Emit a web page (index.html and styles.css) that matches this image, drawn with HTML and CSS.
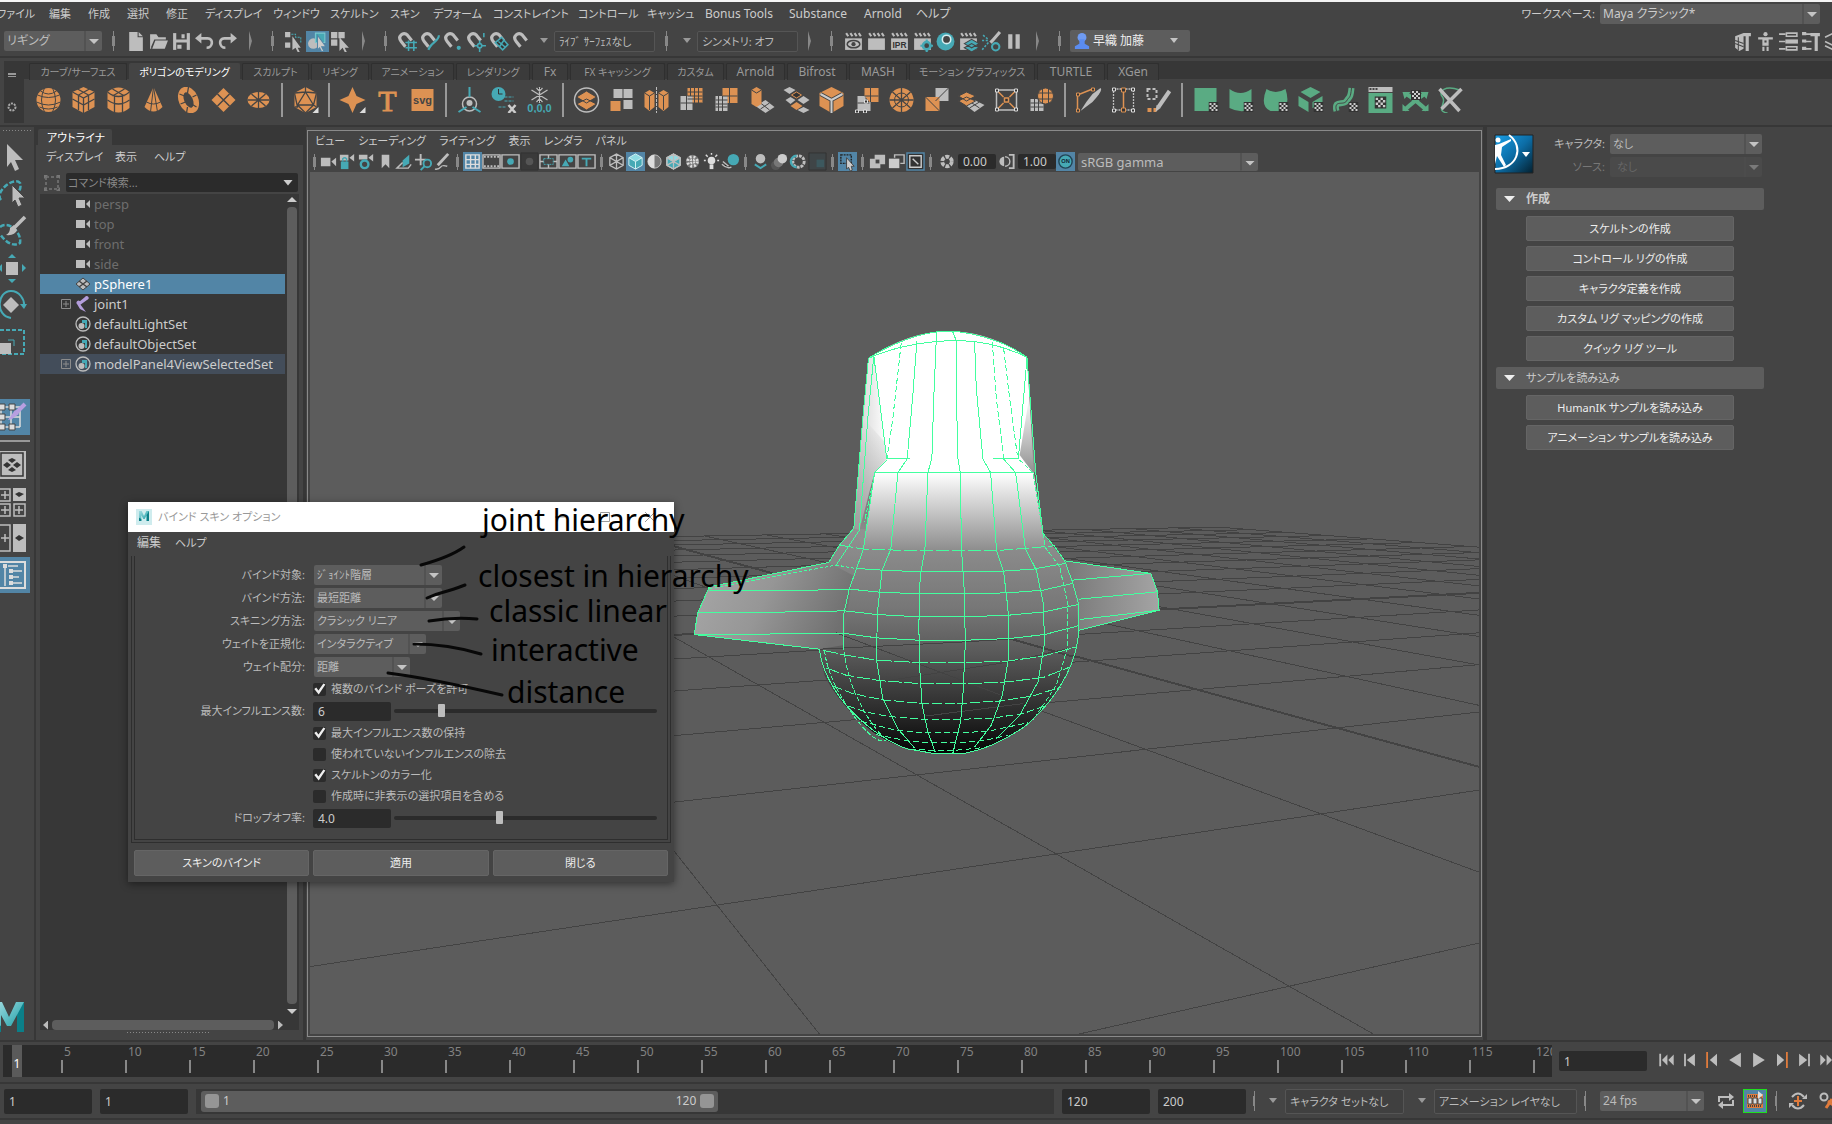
FILE: index.html
```html
<!DOCTYPE html>
<html lang="ja">
<head>
<meta charset="utf-8">
<title>Maya - バインド スキン オプション</title>
<link rel="stylesheet" href="styles.css">
</head>
<body>
<svg class="defs" aria-hidden="true">
<defs>
<linearGradient id="gMid" x1="0" y1="0" x2="0" y2="1"><stop offset="0" stop-color="#fff"/><stop offset=".1" stop-color="#f4f4f4"/><stop offset="1" stop-color="#8c8c8c"/></linearGradient>
<linearGradient id="gBall" x1="0" y1="0" x2="0" y2="1"><stop offset="0" stop-color="#929292"/><stop offset=".35" stop-color="#777"/><stop offset=".55" stop-color="#5a5a5a"/><stop offset=".8" stop-color="#2e2e2e"/><stop offset="1" stop-color="#050505"/></linearGradient>
<linearGradient id="gWl" x1="0" y1="0" x2="1" y2=".25"><stop offset="0" stop-color="#a8a8a8"/><stop offset=".5" stop-color="#969696"/><stop offset="1" stop-color="#707070"/></linearGradient>
<linearGradient id="gWr" x1="0" y1="0" x2="1" y2="0"><stop offset="0" stop-color="#727272"/><stop offset="1" stop-color="#a4a4a4"/></linearGradient>
<linearGradient id="gSideL" x1="0" y1="0" x2="1" y2="0"><stop offset="0" stop-color="#cfcfcf"/><stop offset="1" stop-color="#fff"/></linearGradient>
<linearGradient id="gSideD" x1="0" y1="0" x2="0" y2="1"><stop offset="0" stop-color="#999" stop-opacity="0"/><stop offset="1" stop-color="#909090"/></linearGradient>
<linearGradient id="gHik" x1="0" y1="0" x2="1" y2="1"><stop offset="0" stop-color="#1aa0e8"/><stop offset=".5" stop-color="#0c6da6"/><stop offset="1" stop-color="#04202f"/></linearGradient>
<linearGradient id="gM" x1="0" y1="0" x2="1" y2="1"><stop offset="0" stop-color="#a5dde2"/><stop offset="1" stop-color="#129aa2"/></linearGradient>

<symbol id="clap" viewBox="0 0 20 20"><path fill="#bdbdbd" d="M2 7h16v11H2z"/><path stroke="#bdbdbd" stroke-width="2" d="M3 2l2 3M7 2l2 3M11 2l2 3M15 2l2 3"/></symbol>
<symbol id="magnet" viewBox="0 0 20 20"><path fill="none" stroke="#bdbdbd" stroke-width="3" d="M8 15L4 10C0 5 6 0 10 4l4 5"/></symbol>
<symbol id="cam" viewBox="0 0 16 12"><path fill="#bdbdbd" d="M1 2h9v8H1zM11 6l4-4v8z"/></symbol>
<symbol id="set" viewBox="0 0 16 16"><circle cx="8" cy="8" r="7" fill="none" stroke="#bdbdbd" stroke-width="1.3"/><path fill="#46a9b5" d="M7 4h5v8h-2V7H7z"/><circle cx="6.500" cy="10" r="3" fill="#bdbdbd"/></symbol>
<symbol id="chk" viewBox="0 0 10 10"><path fill="#333" d="M0 0h10v10H0z"/><path fill="#ccc" d="M1 1h2v2H1zM5 1h2v2H5zM3 3h2v2H3zM7 3h2v2H7zM1 5h2v2H1zM5 5h2v2H5zM3 7h2v2H3zM7 7h2v2H7z"/></symbol>
<symbol id="cube" viewBox="0 0 20 20"><path fill="#46a9b5" d="M3 6l7-4 7 4v8l-7 4-7-4z"/><path fill="#8fdbe2" d="M3 6l7-4 7 4-7 4z"/><path stroke="#d5f2f4" fill="none" d="M3 6l7 4 7-4M10 10v8M3 6l7-4 7 4v8l-7 4-7-4z"/></symbol>
<symbol id="wcube" viewBox="0 0 20 20"><path stroke="#bdbdbd" stroke-width="1.400" fill="none" d="M3 6l7 4 7-4M10 10v8M3 6l7-4 7 4v8l-7 4-7-4zM10 2v8M3 14l7-4 7 4"/></symbol>
<symbol id="plus" viewBox="0 0 10 10"><path fill="none" stroke="#8c8c8c" d="M.5.5h9v9h-9zM5 2v6M2 5h6"/></symbol>
<symbol id="maya" viewBox="0 0 30 30"><path fill="url(#gM)" d="M0 0h8l7 15L22 0h8v30h-7V13l-6 11h-4L7 13v17H0z"/><path fill="#0b7f88" d="M23 13l7-13v30h-7zM0 20l7 4v6H0z"/></symbol>
</defs>
</svg>

<nav class="menubar" aria-label="メイン メニュー">
  <button>ファイル</button><button>編集</button><button>作成</button><button>選択</button><button>修正</button><button>ディスプレイ</button><button>ウィンドウ</button><button>スケルトン</button><button>スキン</button><button>デフォーム</button><button>コンストレイント</button><button>コントロール</button><button>キャッシュ</button><button>Bonus Tools</button><button>Substance</button><button>Arnold</button><button>ヘルプ</button>
  <div class="workspace"><label for="ws">ワークスペース:</label><span class="combo"><select id="ws"><option>Maya クラシック*</option></select></span></div>
</nav>

<div class="statusline">
  <span class="combo mode"><select aria-label="メニュー セット"><option>リギング</option></select></span>
  <i class="sep"></i>
  <svg class="ic" viewBox="0 0 20 20"><path fill="#bdbdbd" d="M4 1h8v5h5v13H4zM13 1l4 4h-4z"/></svg>
  <svg class="ic" viewBox="0 0 20 20"><path fill="#bdbdbd" d="M2 3h6l2 3h7v2H6L3 15v2H2zM7 9h12l-3 8H4z"/></svg>
  <svg class="ic" viewBox="0 0 20 20"><path fill="#bdbdbd" d="M2 2h16v16H2z"/><path fill="#444" d="M5 2h10v6H5zM5 11h10v7H5z"/><path fill="#bdbdbd" d="M10 3h3v4h-3zM6 13h4v4H6z"/></svg>
  <svg class="ic" viewBox="0 0 20 20"><path fill="none" stroke="#bdbdbd" stroke-width="2.500" d="M5 7h8c6 0 5 9-1 9"/><path fill="#bdbdbd" d="M1 7l6-5v10z"/></svg>
  <svg class="ic" viewBox="0 0 20 20"><path fill="none" stroke="#bdbdbd" stroke-width="2.500" d="M15 7H7c-6 0-5 9 1 9"/><path fill="#bdbdbd" d="M19 7l-6-5v10z"/></svg>
  <i class="sep end"></i><i class="sep"></i>
  <svg class="ic" viewBox="0 0 20 20"><path fill="#bdbdbd" d="M1 1h5v5H1zM1 11h5v5H1zM8 5l8 11-3 0 2 4-2 0-2-4-3 2z"/><path stroke="#46a9b5" fill="none" stroke-dasharray="2 1" d="M7 3h4v3h5v6"/></svg>
  <span class="ic on"><svg viewBox="0 0 20 20"><circle cx="6" cy="12" r="5" fill="#bdbdbd"/><path fill="#46a9b5" stroke="#7cc7cf" d="M8 2h9v9H8z"/><path fill="#ccc" stroke="#5285a6" d="M10 4l8 11h-4l2 4-2 1-2-4-2 2z"/></svg></span>
  <svg class="ic" viewBox="0 0 20 20"><path fill="#bdbdbd" d="M1 1h6v6H1zM8 1h6v6H8zM1 8h6v6H1zM9 6l9 10h-4l2 4h-2l-2-4-3 3z"/></svg>
  <i class="sep end"></i><i class="sep"></i>
  <svg class="ic" viewBox="0 0 20 20"><use href="#magnet"/><path stroke="#46a9b5" stroke-width="1.500" d="M11 9v10M16 9v10M8 11h11M8 16h11"/></svg>
  <svg class="ic" viewBox="0 0 20 20"><use href="#magnet"/><path stroke="#46a9b5" stroke-width="2" fill="none" d="M18 4c0 6-8 7-10 14"/></svg>
  <svg class="ic" viewBox="0 0 20 20"><use href="#magnet"/><circle cx="15" cy="16" r="2" fill="#46a9b5"/></svg>
  <svg class="ic" viewBox="0 0 20 20"><use href="#magnet"/><circle cx="13" cy="14" r="2" stroke="#46a9b5" fill="none" stroke-width="1.500"/><path stroke="#46a9b5" stroke-width="1.500" d="M13 9v3M13 16v4M8 14h3M15 14h4M17 2v4"/></svg>
  <svg class="ic" viewBox="0 0 20 20"><use href="#magnet"/><path stroke="#46a9b5" fill="#333" stroke-width="1.500" d="M6 11l6-5 6 7-5 5zM9 10l6 5M14 9l-4 6"/></svg>
  <svg class="ic" viewBox="0 0 20 20"><use href="#magnet"/></svg>
  <i class="tri"></i>
  <input class="field" aria-label="ライブ サーフェス" value="ﾗｲﾌﾞ ｻｰﾌｪｽなし" readonly>
  <i class="sep"></i><i class="tri"></i>
  <input class="field" aria-label="シンメトリ" value="シンメトリ: オフ" readonly>
  <i class="sep end"></i><i class="sep"></i>
  <svg class="ic" viewBox="0 0 20 20"><use href="#clap"/><ellipse cx="10" cy="12.500" rx="6" ry="3.500" fill="none" stroke="#444" stroke-width="1.500"/><circle cx="10" cy="12.500" r="2" fill="#444"/></svg>
  <svg class="ic" viewBox="0 0 20 20"><use href="#clap"/></svg>
  <svg class="ic" viewBox="0 0 20 20"><use href="#clap"/><text x="10" y="16" text-anchor="middle" class="ipr">IPR</text></svg>
  <svg class="ic" viewBox="0 0 20 20"><use href="#clap"/><circle cx="14" cy="14" r="3.500" fill="#444" stroke="#46a9b5" stroke-width="2.500"/><path stroke="#46a9b5" stroke-width="2" d="M14 8v2M14 18v2M8 14h2M18 14h2"/></svg>
  <svg class="ic" viewBox="0 0 20 20"><circle cx="10" cy="10" r="8.500" fill="#46a9b5"/><circle cx="11" cy="8" r="4" fill="#444" stroke="#d5eef0" stroke-width="1.500"/></svg>
  <svg class="ic" viewBox="0 0 20 20"><use href="#clap"/><path fill="#46a9b5" stroke="#444" d="M6 16l7-4 7 4-7 4zM6 12l7-4 7 4-7 4z"/></svg>
  <svg class="ic" viewBox="0 0 20 20"><path stroke="#bdbdbd" stroke-width="3" d="M18 1l-7 8M12 8l-3 3"/><path stroke="#46a9b5" stroke-width="1.500" stroke-dasharray="2 1.500" d="M1 9h6M2 4l5 4M7 11l-6 7"/><circle cx="14" cy="15" r="3.500" fill="none" stroke="#46a9b5" stroke-width="2"/></svg>
  <svg class="ic" viewBox="0 0 20 20"><path fill="#bdbdbd" d="M4 3h4v14H4zM11 3h4v14h-4z"/></svg>
  <i class="sep end"></i><i class="sep"></i>
  <button class="user"><svg viewBox="0 0 18 20"><circle cx="9" cy="6" r="5" fill="#6f9bf2"/><path fill="#5b8cf0" d="M6 8h6v5l5 3v3H1v-3l5-3z"/></svg><span>早織 加藤</span><i class="tri"></i></button>
  <div class="statusright">
    <svg class="ic" viewBox="0 0 20 20"><path fill="#bdbdbd" d="M3 5l8-3v15l-4 2-4-3zM11 2h7v3h-2v14h-3V5h-2z"/><path stroke="#444" d="M3 9l8 3M3 12l8 3M6 6v12"/></svg>
    <svg class="ic" viewBox="0 0 20 20"><circle cx="10" cy="3" r="2" fill="#bdbdbd"/><path fill="#bdbdbd" d="M3 6h14v2H3zM7 7h6v7H7zM7 15h2v4H7zM11 15h2v4h-2z"/><path fill="#444" d="M9 9h2v2H9z"/></svg>
    <svg class="ic" viewBox="0 0 20 20"><path fill="none" stroke="#bdbdbd" stroke-width="1.500" d="M1 3h6M1 10h6M1 17h6M8 2h10v3H8zM8 15h10v3H8z"/><path fill="#bdbdbd" d="M7 8h12v4H7z"/></svg>
    <svg class="ic" viewBox="0 0 20 20"><path fill="none" stroke="#bdbdbd" stroke-width="1.500" d="M3 3h7M3 10h7M3 17h7"/><path fill="#bdbdbd" d="M1 1h4v3H1zM1 8h4v3H1zM1 15h4v3H1zM9 2h9v3h-2v14h-3V5H9z"/></svg>
    <svg class="ic" viewBox="0 0 20 20"><path fill="none" stroke="#bdbdbd" stroke-width="1.500" d="M1 6l8-4M1 10l8 4M1 14l8 4"/></svg>
  </div>
</div>

<div class="shelf">
  <div class="shelfside"><svg viewBox="0 0 20 62"><path fill="#999" d="M4 12h8v2H4zM4 15h8v1H4z"/><circle cx="8" cy="46" r="3.500" fill="none" stroke="#aaa" stroke-width="2" stroke-dasharray="2 1"/></svg></div>
  <div class="shelfbody">
    <nav class="tabs" aria-label="シェルフ"><button>カーブ/サーフェス</button><button class="active">ポリゴンのモデリング</button><button>スカルプト</button><button>リギング</button><button>アニメーション</button><button>レンダリング</button><button>Fx</button><button>FX キャッシング</button><button>カスタム</button><button>Arnold</button><button>Bifrost</button><button>MASH</button><button>モーション グラフィックス</button><button>TURTLE</button><button>XGen</button></nav>
    <div class="shelficons">
      <svg viewBox="0 0 26 26"><circle cx="13" cy="13" r="12" fill="#dd9253"/><path fill="none" stroke="#444" d="M2 8q11 5 22 0M1 15q12 6 24 0M4 20q9 4 18 0M9 1q-6 12 0 24M17 1q6 12 0 24M5 4q8 6 16 0"/></svg>
      <svg viewBox="0 0 26 26"><path fill="#dd9253" d="M13 0l11 5v15l-11 6L2 20V5z"/><path fill="none" stroke="#444" stroke-width="1.300" d="M2 5l11 6 11-6M13 11v15M2 12l11 6 11-6M8 8v15M18 8v15M7 2l11 6M19 2L8 8"/></svg>
      <svg viewBox="0 0 26 26"><path fill="#dd9253" d="M2 5q11-9 22 0v16q-11 9-22 0z"/><path fill="none" stroke="#444" stroke-width="1.300" d="M2 5q11 9 22 0M2 13q11 8 22 0M9 9v16M17 9v16M7 2l12 7M19 2L7 9"/></svg>
      <svg viewBox="0 0 26 26"><path fill="#dd9253" d="M13 0l9 20q-9 9-18 0z"/><path fill="none" stroke="#444" d="M13 0l-3 25M13 0l4 25M6 15q7 4 14 0"/></svg>
      <svg viewBox="0 0 26 26"><ellipse cx="13" cy="13" rx="7" ry="11" fill="none" stroke="#dd9253" stroke-width="5.500" transform="rotate(-24 13 13)"/><path stroke="#444" stroke-width="1.300" d="M4 7l5 2M13 0l-1 6M21 8l-4 2M16 17l5 3M5 17l5-2M12 20l-1 6"/></svg>
      <svg viewBox="0 0 26 26"><path fill="#dd9253" d="M13 1l12 12-12 12L1 13z"/><path stroke="#444" stroke-width="1.500" d="M7 7l12 12M19 7L7 19"/></svg>
      <svg viewBox="0 0 26 26"><ellipse cx="13" cy="13" rx="11" ry="8" fill="#dd9253"/><path stroke="#444" stroke-width="1.300" d="M6 7l14 12M20 7L6 19M13 5v16M2 13h22"/></svg>
      <i class="sepv"></i>
      <svg viewBox="0 0 26 26"><path fill="#dd9253" d="M13 0l11 6v14l-11 6L2 20V6z"/><path fill="none" stroke="#444" stroke-width="1.300" d="M13 5l8 13H5zM13 0v5M2 6l11-1 11 1M2 20h3L2 6M24 6l-3 12 3 2M5 18l8 8 8-8"/><path fill="#ddd" d="M26 20v6h-6z"/></svg>
      <i class="sepv"></i>
      <svg viewBox="0 0 26 26"><path fill="#dd9253" d="M13 0l4 9 9 4-9 4-4 9-4-9-9-4 9-4z"/><path fill="#ddd" d="M26 20v6h-6z"/></svg>
      <svg viewBox="0 0 26 26"><text x="13" y="24" text-anchor="middle" class="ttext">T</text></svg>
      <svg viewBox="0 0 26 26"><path fill="#dd9253" d="M2 2h22v22H2z"/><text x="13" y="17" text-anchor="middle" class="tsvg">svg</text></svg>
      <i class="sepv"></i>
      <svg viewBox="0 0 26 26"><circle cx="13" cy="17" r="7" fill="none" stroke="#bdbdbd" stroke-width="1.500"/><circle cx="13" cy="16" r="3" fill="#bdbdbd"/><path stroke="#46a9b5" stroke-width="2" d="M13 0v10M10 20l-8 5M16 20l8 5"/></svg>
      <svg viewBox="0 0 26 26"><circle cx="7" cy="7" r="7" fill="#46a9b5"/><path fill="none" stroke="#333" d="M7 2v5h4"/><path stroke="#46a9b5" d="M13 10h9M13 14h9M7 20h8" stroke-dasharray="3 1"/><path stroke="#ccc" stroke-width="2.500" d="M17 18l7 8M24 18l-7 8"/></svg>
      <svg viewBox="0 0 26 26"><path stroke="#bdbdbd" stroke-width="1.300" d="M13 0v16M5 3l16 10M21 3L5 13M10 1l3 3 3-3M10 15l3-3 3 3"/><text x="13" y="25" text-anchor="middle" class="tzero">0,0,0</text></svg>
      <i class="sepv"></i>
      <svg viewBox="0 0 26 26"><circle cx="13" cy="13" r="12" fill="none" stroke="#bdbdbd" stroke-width="1.500"/><path fill="#dd9253" stroke="#444" d="M3 17l10-5 10 5-10 6zM3 10l10-6 10 6-10 6z"/></svg>
      <svg viewBox="0 0 26 26"><path fill="#bdbdbd" d="M5 2h9v9H5zM15 2h9v9h-9zM15 13h9v9h-9z"/><path fill="#dd9253" d="M2 14h10v10H2z"/></svg>
      <svg viewBox="0 0 26 26"><path fill="#dd9253" d="M1 6l5-3 5 3v14l-5 4-5-4zM15 6l5-3 5 3v14l-5 4-5-4z"/><path stroke="#444" fill="none" d="M1 6l5 3 5-3M6 9v14M15 6l5 3 5-3M20 9v14"/><path stroke="#bdbdbd" stroke-dasharray="3 1" d="M13 0v26"/></svg>
      <svg viewBox="0 0 26 26"><path fill="#dd9253" d="M9 1h15v15H9z"/><path fill="#bdbdbd" d="M2 9h12v14H2z"/><path stroke="#444" d="M8 9v14M2 16h22M12 1v8M16 1v15M20 1v15M9 5h15M9 9h15M9 12h15"/></svg>
      <svg viewBox="0 0 26 26"><path fill="#dd9253" d="M9 1h15v15H9z"/><path fill="#bdbdbd" d="M2 9h12v15H2z"/><path stroke="#444" d="M16 1v15M9 9h15M5 9v15M9 9v15M2 13h12M2 17h12M2 20h12"/></svg>
      <svg viewBox="0 0 26 26"><path fill="#bdbdbd" d="M7 19l10-6 9 7-9 6z"/><path stroke="#444" d="M12 16l9 7M21 16l-9 6"/><path fill="#dd9253" d="M3 3l5-3 5 3v14l-5 3-5-3z"/><path stroke="#444" fill="none" d="M3 3l5 3 5-3"/></svg>
      <svg viewBox="0 0 26 26"><path fill="#bdbdbd" d="M0 3l6-3 6 3-6 4zM14 13l6-4 6 4-6 4zM2 13l5-3 5 3-5 4zM14 23l6-3 6 3-6 3z"/><path fill="#dd9253" d="M7 19l6-4 6 4-6 4z"/><path fill="#333" stroke="#dd9253" d="M8 8l5-3 5 3-5 3z"/></svg>
      <svg viewBox="0 0 26 26"><path fill="#dd9253" d="M13 0l12 6v13l-12 7L1 19V6z"/><path fill="none" stroke="#444" stroke-width="4" d="M2 7l11 6 11-6M13 13v13"/><path fill="none" stroke="#ccc" stroke-width="2" d="M2 7l11 6 11-6M13 13v13"/></svg>
      <svg viewBox="0 0 26 26"><path fill="#dd9253" d="M11 1h14v14h-9L11 9z"/><path fill="#bdbdbd" d="M4 9h8v6h5v9H4z"/><path fill="none" stroke="#444" d="M11 9h14M17 1v14M4 16h12"/><path fill="#333" stroke="#ddd" d="M11 13h3v3h-3zM2 23h3v3H2zM10 23h3v3h-3z"/></svg>
      <svg viewBox="0 0 26 26"><circle cx="13" cy="13" r="12" fill="#dd9253"/><circle cx="13" cy="13" r="7" fill="none" stroke="#444"/><path stroke="#444" stroke-width="1.300" d="M1 13h24M13 1v24M4 5l18 16M22 5L4 21"/></svg>
      <svg viewBox="0 0 26 26"><path fill="#bdbdbd" d="M12 1h13v13H12z"/><path fill="#dd9253" d="M2 10h14v14H2z"/><path stroke="#444" d="M2 10l14 14M25 1L12 14"/></svg>
      <svg viewBox="0 0 26 26"><path fill="#bdbdbd" d="M7 18l9-5 10 5-10 7z"/><path stroke="#444" d="M12 15l9 6M21 15l-10 6"/><path fill="#dd9253" stroke="#444" d="M0 14l8-4 9 4-9 5zM0 9l8-4 9 4-9 5z"/></svg>
      <svg viewBox="0 0 26 26"><path fill="none" stroke="#bdbdbd" stroke-width="1.500" d="M3 3h20v20H3z"/><path stroke="#dd9253" stroke-width="1.500" d="M5 5l5 5M21 5l-5 5M5 21l5-5M21 21l-5-5"/><path fill="#333" stroke="#ddd" d="M2 2h3v3H2zM21 2h3v3h-3zM2 21h3v3H2zM21 21h3v3h-3z"/><path fill="#333" stroke="#dd9253" stroke-width="1.500" d="M11 11h4v4h-4z"/></svg>
      <svg viewBox="0 0 26 26"><path fill="#bdbdbd" d="M2 12h13v12H2z"/><path stroke="#444" d="M6 12v12M10 12v12M2 16h13M2 20h13"/><circle cx="17" cy="9" r="8" fill="#dd9253" stroke="#444"/><path stroke="#444" fill="none" d="M9 6h16M9 12h16M14 1v16M20 1v16"/></svg>
      <i class="sepv"></i>
      <svg viewBox="0 0 26 26"><path fill="none" stroke="#dd9253" stroke-width="1.500" d="M2 24V8L17 2"/><path fill="#333" stroke="#dd9253" d="M1 6h3v3H1zM16 1h3v3h-3zM1 22h3v3H1z"/><path fill="#bdbdbd" d="M25 1q3 2-8 14L5 24q6-10 12-17z"/></svg>
      <svg viewBox="0 0 26 26"><path fill="none" stroke="#bdbdbd" stroke-width="1.300" stroke-dasharray="2 1" d="M3 2h20v21H3z"/><path stroke="#dd9253" stroke-width="1.500" d="M13 2v21"/><path fill="#333" stroke="#dd9253" d="M11 1h4v4h-4zM11 21h4v4h-4z"/><path fill="#333" stroke="#ddd" d="M2 1h3v3H2zM21 1h3v3h-3zM2 22h3v3H2zM21 22h3v3h-3z"/></svg>
      <svg viewBox="0 0 26 26"><path fill="none" stroke="#bdbdbd" stroke-width="2" stroke-dasharray="3 2" d="M2 2h9v10H2z"/><path fill="#dd9253" d="M2 21h4v4H2zM8 21h3v4H8z"/><path stroke="#bdbdbd" stroke-width="4" d="M24 4L13 20"/><path fill="#bdbdbd" d="M11 18l4 3-5 4z"/></svg>
      <i class="sepv"></i>
      <svg viewBox="0 0 26 26"><path fill="#5aab83" d="M2 1h22v23H2z"/><use href="#chk" x="16" y="15" width="10" height="10"/></svg>
      <svg viewBox="0 0 26 26"><path fill="#5aab83" d="M2 2q11 8 22 0v20q-11 5-22-1z"/><use href="#chk" x="16" y="15" width="10" height="10"/></svg>
      <svg viewBox="0 0 26 26"><path fill="#5aab83" d="M4 2q9 6 19 0 5 15-3 22H8Q-3 19 4 2z"/><use href="#chk" x="16" y="15" width="10" height="10"/></svg>
      <svg viewBox="0 0 26 26"><path fill="#5aab83" d="M13 0l10 5-10 6L3 5zM1 9l10 6v10L1 19zM25 9l-10 6v6l10-4z"/><use href="#chk" x="16" y="15" width="10" height="10"/></svg>
      <svg viewBox="0 0 26 26"><path fill="none" stroke="#5aab83" stroke-width="6" d="M4 24c-3-12 7-5 10-10s4-2 5-13"/><path fill="none" stroke="#444" d="M4 24c-3-12 7-5 10-10s4-2 5-13"/><use href="#chk" x="16" y="15" width="10" height="10"/></svg>
      <svg viewBox="0 0 26 26"><path fill="#bdbdbd" d="M1 0h24v5H1z"/><path fill="#5aab83" d="M1 6h24v20H1z"/><path fill="#444" d="M2 1h2v2H2zM5 1h2v2H5zM8 1h2v2H8z"/><use href="#chk" x="7" y="9" width="12" height="13"/></svg>
      <svg viewBox="0 0 26 26"><path stroke="#5aab83" stroke-width="4" d="M4 7q9 6 20 16M22 7Q13 13 2 23" fill="none"/><path fill="#5aab83" d="M0 5h8l-6 7zM26 5h-8l6 7zM0 24v-7l7 7zM26 24v-7l-7 7z"/><use href="#chk" x="8" y="3" width="11" height="10"/></svg>
      <svg viewBox="0 0 26 26"><path fill="none" stroke="#5aab83" stroke-width="1.500" d="M22 3C8-2 0 4 5 10s-8 14 5 16"/><path stroke="#bdbdbd" stroke-width="3.500" d="M2 2l20 22M24 2L4 22"/></svg>
      <i class="grow"></i>
    </div>
  </div>
</div>

<main class="main">
  <aside class="toolbox" aria-label="ツール ボックス">
    <i class="dots"></i>
    <svg class="tool" viewBox="0 0 30 36"><path fill="#bdbdbd" d="M7 5l16 16h-8l4 9-4 2-4-9-4 5z"/></svg>
    <svg class="tool" viewBox="0 0 30 36"><path fill="none" stroke="#46a9b5" stroke-width="2.500" stroke-dasharray="5 2" d="M1 24C-6 16 14 0 20 7c2 6-2 10-6 13"/><path fill="#bdbdbd" stroke="#444" d="M12 9l13 13h-6l3 7-4 2-3-7-3 3z"/></svg>
    <svg class="tool" viewBox="0 0 30 36"><path fill="none" stroke="#46a9b5" stroke-width="2.500" stroke-dasharray="5 2" d="M0 14c9-7 22 6 20 16-8 5-16-3-20-9"/><path stroke="#bdbdbd" stroke-width="3.500" d="M25 4L13 16"/><path fill="#bdbdbd" d="M14 12l3 5q-2 6-11 5 4-2 4-7z"/></svg>
    <svg class="tool" viewBox="0 0 30 36"><path fill="#bdbdbd" d="M6 12h12v13H6z"/><path fill="#46a9b5" d="M12 4l4 4H8zM12 33l4-4H8zM26 18l-4-4v8zM-2 18l4-4v8z"/></svg>
    <svg class="tool" viewBox="0 0 30 36"><path fill="#bdbdbd" d="M11 10l8 8-8 8-8-8z"/><path fill="none" stroke="#46a9b5" stroke-width="2" d="M11 31c-16-2-14-27 0-27 8 0 14 8 13 16"/><path fill="#46a9b5" d="M20 17h7l-3 5z"/></svg>
    <svg class="tool" viewBox="0 0 30 36"><path fill="none" stroke="#46a9b5" stroke-width="2" stroke-dasharray="4 2" d="M0 6h24v24H0"/><path fill="#bdbdbd" d="M0 19h11v11H0z"/><path fill="none" stroke="#46a9b5" d="M8 16h6v6"/></svg>
    <i class="toolgap"></i>
    <span class="tool on"><svg viewBox="0 0 30 36"><path fill="none" stroke="#ddd" stroke-width="1.500" d="M1 8h19M1 18h19M1 28h19M1 8v20M11 8v20M20 8v20"/><path fill="#ddd" stroke="#444" d="M-1 5h6v6h-6zM9 5h6v6H9zM-1 15h6v6h-6zM-1 25h6v6h-6zM9 25h6v6H9z"/><path stroke="#b79fe0" stroke-width="4" d="M25 5l-9 9"/><path fill="#b79fe0" d="M15 11l4 4-7 5-4 1z"/></svg></span>
    <i class="toolline"></i>
    <svg class="tool" viewBox="0 0 30 36"><path fill="#bdbdbd" d="M-1 5h27v28H-1z"/><path fill="none" stroke="#333" stroke-width="1.500" d="M1 7h22v23H1z"/><path fill="#333" d="M12 12l4 2-4 3-4-3zM7 16l4 3-4 3-4-3zM17 16l4 3-4 3-4-3zM12 21l4 3-4 2-4-2z"/></svg>
    <svg class="tool" viewBox="0 0 30 36"><path fill="#bdbdbd" d="M13 5h13v13H13z"/><path fill="none" stroke="#bdbdbd" stroke-width="1.500" d="M-1 6h11v12H-1zM-1 21h11v12H-1zM14 21h11v12H14zM5 8v8M1 12h8M5 23v8M1 27h8M19 23v8M15 27h8"/><path fill="#333" d="M15 11l4-2 5 2-5 3z"/></svg>
    <svg class="tool" viewBox="0 0 30 36"><path fill="#bdbdbd" d="M13 4h13v28H13z"/><path fill="none" stroke="#bdbdbd" stroke-width="1.500" d="M-1 5h11v26H-1zM5 14v8M1 18h8"/><path fill="#333" d="M15 18l4-3 5 3-5 3z"/></svg>
    <span class="tool on"><svg viewBox="0 0 30 36"><path fill="none" stroke="#ddd" stroke-width="2" d="M-1 5h26v26H-1z"/><path fill="none" stroke="#ddd" stroke-width="1.500" d="M5 9v20M8 9h10M10 14h12M10 20h9M10 26h12"/><path fill="#ddd" d="M3 7h4v4H3zM9 12h4v4H9zM9 18h4v4H9zM9 24h4v4H9z"/></svg></span>
    <i class="grow"></i>
    <svg class="mlogo" viewBox="6 0 24 30"><use href="#maya" width="30" height="30"/></svg>
  </aside>

  <section class="outliner" aria-label="アウトライナ">
    <div class="otab"><span>アウトライナ</span></div>
    <nav class="omenu"><button>ディスプレイ</button><button>表示</button><button>ヘルプ</button></nav>
    <div class="osearch"><svg viewBox="0 0 16 16"><path fill="none" stroke="#777" stroke-width="1.500" stroke-dasharray="3 2" d="M2 2h12v12H2z"/><path fill="#777" d="M0 0h4L0 4zM16 0v4l-4-4zM0 16v-4l4 4zM16 16h-4l4-4z"/></svg><div class="searchbox"><input type="text" aria-label="検索" placeholder="コマンド検索..."><i></i></div></div>
    <div class="obody">
      <ul class="tree">
        <li class="dim"><i></i><svg><use href="#cam"/></svg>persp</li>
        <li class="dim"><i></i><svg><use href="#cam"/></svg>top</li>
        <li class="dim"><i></i><svg><use href="#cam"/></svg>front</li>
        <li class="dim"><i></i><svg><use href="#cam"/></svg>side</li>
        <li class="sel"><i></i><svg viewBox="0 0 16 14"><path fill="#bdbdbd" stroke="#444" d="M8 1l7 6-7 6-7-6z"/><path stroke="#444" stroke-width="1.500" d="M4 4l8 6M12 4l-8 6"/></svg>pSphere1</li>
        <li><svg class="exp"><use href="#plus"/></svg><svg viewBox="0 0 16 16"><path fill="#b39ddb" d="M10 1a2 2 0 1 1 2 3L5 9 4 6zM2 8a2 2 0 1 1 3 0l6 8-6-3z"/></svg>joint1</li>
        <li><i></i><svg><use href="#set"/></svg>defaultLightSet</li>
        <li><i></i><svg><use href="#set"/></svg>defaultObjectSet</li>
        <li class="hl"><svg class="exp"><use href="#plus"/></svg><svg><use href="#set"/></svg>modelPanel4ViewSelectedSet</li>
      </ul>
      <div class="vscroll"><i class="up"></i><b></b><i class="down"></i></div>
    </div>
    <div class="hscroll"><i class="left"></i><b></b><i class="right"></i></div>
    <i class="dots"></i>
  </section>

  <section class="view" aria-label="ビュー パネル">
    <nav class="vmenu"><button>ビュー</button><button>シェーディング</button><button>ライティング</button><button>表示</button><button>レンダラ</button><button>パネル</button></nav>
    <div class="vtools">
      <i class="sep first"></i>
      <svg viewBox="0 0 20 20"><path fill="#bdbdbd" d="M2 6h10v9H2zM13 10l5-4v9z"/></svg>
      <svg viewBox="0 0 20 20"><path fill="#bdbdbd" d="M2 3h9v6H2zM12 6l5-4v8z"/><path fill="#46a9b5" d="M3 10h8v8H3z"/><path fill="none" stroke="#46a9b5" stroke-width="1.500" d="M5 10V7q2-2 4 0v3"/></svg>
      <svg viewBox="0 0 20 20"><path fill="#bdbdbd" d="M2 3h9v5H2zM12 6l5-4v8z"/><circle cx="8" cy="13" r="4" fill="#444" stroke="#46a9b5" stroke-width="2.500"/></svg>
      <svg viewBox="0 0 20 20"><path fill="#bdbdbd" d="M6 3h8v14l-4-4-4 4z"/></svg>
      <svg viewBox="0 0 20 20"><path fill="#46a9b5" d="M8 9l7-6v9l-7 4z"/><path fill="none" stroke="#bdbdbd" stroke-width="1.500" d="M8 11l-6 6h12l3-4"/></svg>
      <svg viewBox="0 0 20 20"><path stroke="#bdbdbd" stroke-width="2" d="M7 2v12M1 8h12"/><circle cx="14" cy="12" r="4" fill="#444" stroke="#46a9b5" stroke-width="2"/><path stroke="#46a9b5" stroke-width="2" d="M11 15l-4 4"/></svg>
      <svg viewBox="0 0 20 20"><path stroke="#bdbdbd" stroke-width="3" d="M16 2L5 14"/><path fill="none" stroke="#bdbdbd" stroke-width="1.500" d="M2 18c9 1 3-6 13-3"/></svg>
      <i class="sep"></i>
      <span class="on"><svg viewBox="0 0 20 20"><path fill="none" stroke="#ddd" stroke-width="1.500" d="M3 3h14v14H3zM8 3v14M13 3v14M3 8h14M3 13h14"/></svg></span>
      <svg viewBox="0 0 20 20"><path fill="none" stroke="#bdbdbd" stroke-width="1.500" d="M1 3h18v14H1z"/><path stroke="#bdbdbd" stroke-width="2" stroke-dasharray="2 1.500" d="M2 5h16M2 15h16"/></svg>
      <svg viewBox="0 0 20 20"><path fill="none" stroke="#bdbdbd" stroke-width="1.500" d="M1 3h18v14H1z"/><circle cx="10" cy="10" r="3.500" fill="#46a9b5"/></svg>
      <svg viewBox="0 0 20 20"><path fill="#3a3a3a" stroke="#333" d="M1 1h18v18H1z"/><circle cx="10" cy="10" r="4" fill="#555"/></svg>
      <svg viewBox="0 0 20 20"><path fill="none" stroke="#bdbdbd" stroke-width="1.500" d="M1 3h18v14H1zM10 3v4M10 13v4M1 10h4M15 10h4"/><path fill="none" stroke="#46a9b5" stroke-dasharray="2 1" d="M5 7h10v6H5z"/></svg>
      <svg viewBox="0 0 20 20"><path fill="none" stroke="#bdbdbd" stroke-width="1.500" d="M1 3h18v14H1z"/><path fill="#46a9b5" d="M4 15l4-7 4 7z"/><circle cx="13" cy="8" r="3" fill="#46a9b5"/></svg>
      <svg viewBox="0 0 20 20"><path fill="none" stroke="#bdbdbd" stroke-width="1.500" d="M1 3h18v14H1z"/><path stroke="#46a9b5" stroke-width="2" d="M5 7h10M10 6v9"/></svg>
      <i class="sep"></i>
      <svg viewBox="0 0 20 20"><use href="#wcube"/></svg>
      <span class="on"><svg viewBox="0 0 20 20"><use href="#cube"/></svg></span>
      <svg viewBox="0 0 20 20"><circle cx="10" cy="10" r="7" fill="#777" stroke="#bdbdbd"/><path fill="#ddd" d="M10 3v14a7 7 0 0 1 0-14z"/></svg>
      <svg viewBox="0 0 20 20"><use href="#cube"/><use href="#wcube"/></svg>
      <svg viewBox="0 0 20 20"><circle cx="10" cy="10" r="7" fill="#777"/><circle cx="10" cy="10" r="5" fill="none" stroke="#ddd" stroke-width="3" stroke-dasharray="2 2"/><circle cx="10" cy="10" r="2" fill="none" stroke="#ddd" stroke-width="2" stroke-dasharray="2 1"/></svg>
      <svg viewBox="0 0 20 20"><circle cx="10" cy="9" r="4" fill="#ddd"/><path fill="#ddd" d="M8 13h4v5H8z"/><path stroke="#ddd" stroke-width="1.500" d="M10 1v2M2 9h2M16 9h2M4 3l2 2M16 3l-2 2"/></svg>
      <svg viewBox="0 0 20 20"><circle cx="13" cy="8" r="6" fill="#46a9b5"/><path stroke="#bdbdbd" stroke-width="1.500" d="M1 13q5 5 10 3M2 10l6 5"/></svg>
      <i class="sep"></i>
      <svg viewBox="0 0 20 20"><circle cx="10" cy="7" r="5" fill="#bdbdbd"/><path fill="none" stroke="#46a9b5" stroke-width="2" d="M4 13l6 4 6-4"/></svg>
      <svg viewBox="0 0 20 20"><circle cx="6" cy="14" r="5" fill="#555"/><circle cx="9" cy="11" r="5" fill="#777"/><circle cx="13" cy="7" r="5" fill="#ccc"/></svg>
      <svg viewBox="0 0 20 20"><circle cx="10" cy="10" r="6" fill="none" stroke="#bdbdbd" stroke-width="3" stroke-dasharray="3 1"/><path fill="none" stroke="#46a9b5" stroke-width="2.500" d="M8 4a6 6 0 0 0 0 12"/></svg>
      <svg viewBox="0 0 20 20"><path fill="#3f4547" stroke="#333" d="M1 1h18v18H1z"/><path fill="#3c585e" d="M9 8h8v8H9z"/></svg>
      <i class="sep"></i>
      <span class="on"><svg viewBox="0 0 20 20"><path fill="none" stroke="#222" stroke-width="1.500" stroke-dasharray="2 1" d="M3 3h11v9H3z"/><path fill="#ccc" stroke="#444" d="M9 6l8 9h-3l1 4-2 1-2-4-2 2z"/></svg></span>
      <i class="sep"></i>
      <svg viewBox="0 0 20 20"><path fill="#bdbdbd" d="M7 3h11v10H7zM2 7h11v10H2z"/><path fill="#444" d="M8 8h4v4H8z"/></svg>
      <svg viewBox="0 0 20 20"><path fill="none" stroke="#bdbdbd" stroke-width="1.500" d="M8 6V3h10v9h-4"/><path fill="#ccc" d="M2 7h11v10H2z"/></svg>
      <svg viewBox="0 0 20 20"><path fill="#333" stroke="#5285a6" stroke-width="1.500" d="M1 1h18v18H1z"/><path fill="none" stroke="#ccc" stroke-width="1.500" d="M4 4h12v12H4zM7 7l6 6"/></svg>
      <i class="sep"></i>
      <svg class="roomy" viewBox="0 0 20 20"><circle cx="10" cy="10" r="5" fill="none" stroke="#bdbdbd" stroke-width="4" stroke-dasharray="4 1.300"/></svg>
      <input aria-label="露出" value="0.00">
      <svg class="roomy" viewBox="0 0 20 20"><path fill="none" stroke="#bdbdbd" stroke-width="2" d="M12 3h5v14h-5"/><path fill="#bdbdbd" d="M7 5v10a5 5 0 0 1 0-10z"/><path fill="none" stroke="#bdbdbd" stroke-width="1.500" d="M8 5a5 5 0 0 1 0 10"/></svg>
      <input aria-label="ガンマ" value="1.00">
      <span class="on"><svg viewBox="0 0 20 20"><circle cx="10" cy="10" r="7" fill="#46a9b5" stroke="#245" stroke-width="1.500"/><text x="10" y="12" text-anchor="middle" class="ton">ON</text></svg></span>
      <span class="combo cm"><select aria-label="ビュー変換"><option>sRGB gamma</option></select></span>
    </div>
    <div class="canvas">
      <svg viewBox="310 174 1170 861" preserveAspectRatio="xMidYMid slice">
        <g id="grid" stroke="#434343" shape-rendering="crispEdges"></g>
        <g transform="translate(680 310) scale(.33333)">
          <path fill="url(#gWl)" d="M448 762L90 835 70 880 55 915 45 978 420 1022 540 1010V760z"/>
          <path fill="url(#gWr)" d="M1155 757L1413 795 1433 850 1438 905 1198 965 1120 900z"/>
          <path fill="url(#gBall)" d="M520 662L1090 675 1155 757Q1190 840 1197 965 1192 1020 1150 1120 1100 1200 1040 1250 950 1315 860 1333H755Q650 1320 580 1270 480 1190 435 1100L418 1022 490 1010 520 800 448 762 480 710z"/>
          <path fill="url(#gMid)" d="M585 492H1062L1090 675 1097 722 850 727 550 722z"/>
          <path fill="#fff" d="M567 150Q690 69 805 69 930 69 1042 147L1063 494H585L523 660z"/>
          <path fill="url(#gSideL)" d="M567 150L583 143 622 452 585 493 540 665 523 660z"/>
          <path fill="url(#gSideD)" d="M552 330L615 400 622 452 585 493 552 722 523 660z"/>
          <path fill="url(#gSideD)" d="M1050 260L1020 440 1060 493 1068 490z"/>
          <g stroke="#434343" stroke-width="3" fill="none" shape-rendering="crispEdges"><path d="M418 1022L820 1002 990 992M470 973L960 1158M600 1120L990 1060 1165 1020M740 1222L1030 1185"/><path stroke-width="6" d="M990 990L1190 1047"/></g>
          <g id="wire" fill="none" stroke="#43ff9f" stroke-width="3" shape-rendering="crispEdges">
            <path d="M567 150Q610 122 660 102 740 69 805 69T960 102Q1000 118 1042 147L1068 490 1090 675 1125 715 1155 757 1413 795 1433 850 1438 905 1198 965"/>
            <path d="M567 150L550 330 523 660 480 710 448 762 90 835 70 880 55 915 45 978 420 1022Q430 1105 500 1190 580 1280 680 1320L755 1333H860Q950 1315 1040 1250 1120 1180 1160 1100 1195 1030 1197 965L1195 880 1178 820 1155 757"/>
            <path d="M567 150Q680 100 830 97 940 97 1042 147M583 143L565 330 540 665 470 770M583 143L622 452H692M1042 150L1016 452H940"/>
            <path stroke-dasharray="18 8" d="M665 105L640 330 622 452M972 120L990 270 1013 440M938 100L950 270 973 452"/>
            <path d="M712 100L700 260 683 452 655 493 634 722 608 785 593 920 592 1060 610 1170 655 1260 705 1318"/>
            <path d="M770 72V97L763 260 757 450 745 493 736 727 722 800 718 950 720 1070 728 1190 745 1270 767 1330"/>
            <path d="M820 72L830 97V240L835 450 842 493 846 727 855 860 857 1010 850 1160 843 1240 820 1333"/>
            <path d="M885 97L890 240 910 452 933 493 951 727 972 790 985 900 988 1040 968 1160 935 1250 885 1315"/>
            <path d="M972 452L1008 493 1037 720 1070 785 1090 880 1095 1000 1075 1120 1020 1220 950 1290"/>
            <path stroke-dasharray="14 6" d="M1020 455L1060 493 1097 718 1140 775 1165 890 1163 1020 1130 1130 1060 1235"/>
            <path d="M622 455L585 493 552 722 510 840 492 920V1010"/>
            <path stroke-dasharray="14 6" d="M585 500L555 640M492 1010Q500 1110 550 1200T640 1300M435 1025Q445 1110 515 1210T620 1295"/>
            <path d="M585 493H1062"/>
            <path stroke-dasharray="40 8" d="M482 710L552 722 650 725 736 727H850L970 725 1060 718 1125 712"/>
            <path d="M530 780L608 785 722 790H850L972 788 1060 782 1155 765"/><path stroke-dasharray="10 6" d="M90 840L470 770 530 780"/>
            <path d="M90 845H400L512 842 600 851 720 856H855L985 853 1090 845 1178 825M1178 815L1413 795"/>
            <path d="M55 913L370 910 495 907 592 918 718 925H857L987 920 1095 910 1195 888M1198 872L1433 850"/>
            <path d="M45 979L400 975 490 974 592 988 718 995H857L988 990 1095 978 1195 952M1200 933L1438 905"/>
            <path stroke-dasharray="48 6" d="M430 1025L490 1038 592 1055 720 1062H857L980 1058 1090 1043 1190 1015"/>
            <path stroke-dasharray="40 8" d="M440 1078L500 1100 600 1116 722 1125 857 1126 980 1120 1090 1107 1172 1075"/>
            <path stroke-dasharray="30 8" d="M460 1132L520 1155 612 1174 728 1184H850L962 1177 1060 1162 1145 1135"/>
            <path stroke-dasharray="22 10" d="M505 1192L560 1210 630 1224 735 1232H850L940 1228 1030 1215 1100 1190"/>
            <path stroke-dasharray="18 10" d="M545 1238L650 1265 740 1273H840L930 1267 1045 1242M590 1278L690 1298 760 1303H840L910 1296 985 1280M690 1322L760 1325H825L900 1318"/>
          </g>
        </g>
      </svg>
    </div>
  </section>

  <aside class="hik" aria-label="HumanIK">
    <div class="hikhead">
      <button class="hikbtn" aria-label="HumanIK メニュー"><svg viewBox="0 0 40 40"><path fill="url(#gHik)" stroke="#222" d="M1 1h38v38H1z"/><path fill="none" stroke="#fff" stroke-width="2" d="M15 1c16 12 8 34-14 34"/><circle cx="4" cy="6" r="2.500" fill="#fff"/><path fill="#fff" d="M1 11l4-1 12-5v2L8 13l-1 8 5 10-2 2-7-11-2 8z"/><path fill="#fff" d="M28 18h8l-4 5z"/></svg></button>
      <div class="hikform">
        <label for="ch">キャラクタ:</label><span class="combo"><select id="ch"><option>なし</option></select></span>
        <label for="src" class="off">ソース:</label><span class="combo off"><select id="src" disabled><option>なし</option></select></span>
      </div>
    </div>
    <h2>作成</h2>
    <div class="hikbtns"><button>スケルトンの作成</button><button>コントロール リグの作成</button><button>キャラクタ定義を作成</button><button>カスタム リグ マッピングの作成</button><button>クイック リグ ツール</button></div>
    <h2>サンプルを読み込み</h2>
    <div class="hikbtns"><button>HumanIK サンプルを読み込み</button><button>アニメーション サンプルを読み込み</button></div>
  </aside>
</main>

<footer>
  <div class="timerow">
    <div class="timeline"><b class="cur">1</b><ol><li>5</li><li>10</li><li>15</li><li>20</li><li>25</li><li>30</li><li>35</li><li>40</li><li>45</li><li>50</li><li>55</li><li>60</li><li>65</li><li>70</li><li>75</li><li>80</li><li>85</li><li>90</li><li>95</li><li>100</li><li>105</li><li>110</li><li>115</li><li>120</li></ol></div>
    <input class="num" aria-label="現在のフレーム" value="1">
    <div class="play">
      <svg viewBox="0 0 20 20"><path fill="#bdbdbd" d="M2 3h2v14H2zM11 4v12l-6-6zM18 4v12l-6-6z"/></svg>
      <svg viewBox="0 0 20 20"><path fill="#bdbdbd" d="M4 3h2v14H4zM16 3v14l-9-7z"/></svg>
      <svg viewBox="0 0 20 20"><path fill="#e07b3c" d="M3 1h2v18H3z"/><path fill="#bdbdbd" d="M15 3v14l-8-7z"/></svg>
      <svg viewBox="0 0 20 20"><path fill="#bdbdbd" d="M16 2v16L3 10z"/></svg>
      <svg viewBox="0 0 20 20"><path fill="#bdbdbd" d="M4 2v16l13-8z"/></svg>
      <svg viewBox="0 0 20 20"><path fill="#e07b3c" d="M15 1h2v18h-2z"/><path fill="#bdbdbd" d="M5 3v14l8-7z"/></svg>
      <svg viewBox="0 0 20 20"><path fill="#bdbdbd" d="M14 3h2v14h-2zM4 3v14l9-7z"/></svg>
      <svg viewBox="0 0 20 20"><path fill="#bdbdbd" d="M16 3h2v14h-2zM2 4v12l6-6zM9 4v12l6-6z"/></svg>
    </div>
  </div>
  <div class="rangerow">
    <input class="num" aria-label="アニメーション開始" value="1"><input class="num" aria-label="再生開始" value="1">
    <div class="range"><div class="bar"><i></i><span>1</span><span class="r">120</span><i></i></div></div>
    <input class="num" aria-label="再生終了" value="120"><input class="num" aria-label="アニメーション終了" value="200">
    <i class="sep"></i><i class="tri hollow"></i><input class="field" aria-label="キャラクタ セット" value="キャラクタ セットなし" readonly>
    <i class="tri hollow"></i><input class="field wide" aria-label="アニメーション レイヤ" value="アニメーション レイヤなし" readonly>
    <i class="sep"></i><span class="combo fps"><select aria-label="フレーム レート"><option>24 fps</option></select></span>
    <div class="opts">
      <svg viewBox="0 0 20 20"><path fill="none" stroke="#bdbdbd" stroke-width="2" d="M3 11V6h11M17 9v5H6"/><path fill="#bdbdbd" d="M13 2l5 4-5 4zM7 10l-5 4 5 4z"/></svg>
      <span class="cache"><svg viewBox="0 0 20 20"><path fill="#e07b3c" d="M2 3h16v14H2z"/><path stroke="#444" stroke-dasharray="1 1" stroke-width="2" d="M3 5h14M3 15h14"/><path fill="#ddd" stroke="#444" d="M3 7h4v6H3zM8 7h4v6H8zM13 7h4v6h-4z"/><path fill="#ddd" d="M13 0l5 4-5 4z"/></svg></span>
      <i class="sep"></i>
      <svg viewBox="0 0 20 20"><path fill="none" stroke="#bdbdbd" stroke-width="2" d="M4 6q6-7 12 0M4 14q6 7 12 0"/><path fill="#bdbdbd" d="M14 8h5V3zM6 12H1v5z"/><path fill="#e07b3c" d="M9 5h2v10H9zM6 9h8v2H6z"/></svg>
      <svg viewBox="0 0 20 20"><circle cx="6" cy="6" r="3.500" fill="none" stroke="#bdbdbd" stroke-width="2"/><path stroke="#e07b3c" stroke-width="3" d="M14 8l-6 9M10 10l8 6"/></svg>
    </div>
  </div>
  <div class="cmdline"></div>
</footer>

<section class="dialog" role="dialog" aria-label="バインド スキン オプション">
  <header><svg viewBox="0 0 16 16"><path fill="#cfecee" d="M0 0h16v16H0z"/><use href="#maya" x="2" y="2" width="12" height="10"/></svg><h1>バインド スキン オプション</h1><span class="winbtns"><button aria-label="最小化"><svg viewBox="0 0 10 10"><path d="M0 5h10"/></svg></button><button aria-label="最大化"><svg viewBox="0 0 10 10"><path d="M.5.5h9v9h-9z"/></svg></button><button aria-label="閉じる"><svg viewBox="0 0 10 10"><path d="M0 0l10 10M10 0L0 10"/></svg></button></span></header>
  <nav class="dmenu"><button>編集</button><button>ヘルプ</button></nav>
  <div class="frame"><form>
    <label for="b1">バインド対象:</label><span class="combo w128"><select id="b1"><option>ｼﾞｮｲﾝﾄ階層</option></select></span>
    <label for="b2">バインド方法:</label><span class="combo w128"><select id="b2"><option>最短距離</option></select></span>
    <label for="b3">スキニング方法:</label><span class="combo w146"><select id="b3"><option>クラシック リニア</option></select></span>
    <label for="b4">ウェイトを正規化:</label><span class="combo w112"><select id="b4"><option>インタラクティブ</option></select></span>
    <label for="b5">ウェイト配分:</label><span class="combo w96"><select id="b5"><option>距離</option></select></span>
    <label class="check"><input type="checkbox" checked>複数のバインド ポーズを許可</label>
    <label for="n1">最大インフルエンス数:</label><span class="slide"><input id="n1" type="text" value="6"><input type="range" aria-label="最大インフルエンス数" min="1" max="30" value="6"></span>
    <label class="check"><input type="checkbox" checked>最大インフルエンス数の保持</label>
    <label class="check"><input type="checkbox">使われていないインフルエンスの除去</label>
    <label class="check"><input type="checkbox" checked>スケルトンのカラー化</label>
    <label class="check"><input type="checkbox">作成時に非表示の選択項目を含める</label>
    <label for="n2">ドロップオフ率:</label><span class="slide"><input id="n2" type="text" value="4.0"><input type="range" aria-label="ドロップオフ率" min="0" max="10" step="0.1" value="4"></span>
  </form></div>
  <div class="dbtns"><button>スキンのバインド</button><button>適用</button><button>閉じる</button></div>
  <svg class="strokes" viewBox="0 0 547 380"><path d="M293 63Q322 55 336 45M299 96Q308 92 316 90T337 83M301 119Q325 115 349 117M286 142Q320 142 353 152M260 171Q300 176 374 193"/></svg>
  <p class="note n-joint">joint hierarchy</p>
  <p class="note n-close">closest in hierarchy</p>
  <p class="note n-classic">classic linear</p>
  <p class="note n-inter">interactive</p>
  <p class="note n-dist">distance</p>
</section>
<script src="grid.js"></script>
</body>
</html>
```
FILE: grid.js
```js
// Perspective ground grid: projects a 22 x 22 unit plane into the viewport.
const project = (u, v) => {
  const w = 1 - 0.049 * u - 0.1006 * v;
  return { x: (946.1 - 170.3 * u - 36.8 * v) / w, y: (622.2 - 24 * u - 46.6 * v) / w, w };
};
const grid = document.getElementById('grid');
const N = 11;
function addLine(at, thick) {
  let end = N;
  while (at(end).w < 0.04) end -= 0.05;
  const a = at(-N), b = at(end);
  const line = document.createElementNS('http://www.w3.org/2000/svg', 'line');
  line.setAttribute('x1', a.x); line.setAttribute('y1', a.y);
  line.setAttribute('x2', b.x); line.setAttribute('y2', b.y);
  line.setAttribute('stroke-width', thick ? 2 : 1);
  grid.appendChild(line);
}
for (let i = -N; i <= N; i++) {
  addLine(t => project(i, t), i === 0);
  addLine(t => project(t, i), i === 0);
}
```
FILE: styles.css
```css
*, ::before, ::after { box-sizing: border-box; }
body {
  margin: 0; min-height: 100vh; display: flex; flex-direction: column; overflow: hidden;
  background: #444; color: #bbb; border-top: 2px solid #f4f4f4;
  font: 12px/16px "Noto Sans", "Noto Sans CJK JP", sans-serif;
  font-feature-settings: "palt";
}
button, input, select { font: inherit; font-feature-settings: inherit; color: inherit; border: 0; padding: 0; margin: 0; background: none; border-radius: 2px; }
button { white-space: nowrap; }
nav button { text-align: left; }
i { font-style: normal; }
svg { display: block; flex: none; }
.defs { position: absolute; width: 0; height: 0; }
.grow { flex: 1; }

.combo { display: grid; height: 20px; background: #5d5d5d; border-radius: 2px; }
.combo select { grid-area: 1 / 1; appearance: none; width: 100%; padding: 0 20px 0 3px; }
.combo::after { content: ""; grid-area: 1 / 1; justify-self: end; width: 18px; height: 100%; background: linear-gradient(#525252, #525252) 0 0 / 2px 100% no-repeat, conic-gradient(from -45deg at 50% 100%, #c4c4c4 90deg, transparent 0) 0 0 / 0 0 no-repeat, linear-gradient(#c4c4c4, #c4c4c4) 5px 8px / 10px 5px no-repeat; clip-path: polygon(0 0, 2px 0, 2px 100%, 0 100%, 0 0, 5px 8px, 15px 8px, 10px 13px, 5px 8px); pointer-events: none; }
.sep { flex: none; width: 22px; height: 20px; background: linear-gradient(#888, #888) center / 1px 20px no-repeat, linear-gradient(#888, #888) center / 3px 10px no-repeat; }
.sep.end { background: #888; clip-path: polygon(10px 0, 13px 10px, 10px 20px); }
.tri { flex: none; width: 20px; height: 6px; background: #999; clip-path: polygon(6px 0, 14px 0, 10px 5px); }
.field { width: 101px; height: 21px; border: 1px solid #555; background: #404040; padding: 0 4px; font-size: 11px; }
.num { width: 88px; height: 25px; background: #2b2b2b; padding: 0 5px; color: #ccc; }

.menubar { display: grid; grid-template-columns: 52px 39px 39px 39px 39px 68px 57px 60px 43px 60px 85px 69px 58px 84px 75px 52px 60px 1fr; align-items: center; height: 24px; margin-left: -3px; font-size: 11px; color: #ccc; }
.menubar button:nth-child(n+14) { font-size: 12px; }
.workspace { justify-self: end; display: flex; align-items: center; gap: 5px; padding-right: 12px; }
.workspace .combo { width: 220px; font-size: 12px; }

.statusline { display: flex; align-items: center; height: 30px; padding-left: 4px; overflow: hidden; }
.mode { width: 98px; }
.ic { flex: none; width: 23px; height: 21px; padding: 0 1px; }
.on { background: #5285a6; }
.on svg { width: 100%; height: 100%; }
.ipr { font: bold 8px "Liberation Sans", sans-serif; fill: #333; }
.user { display: flex; align-items: center; width: 120px; height: 22px; padding-left: 4px; background: #5d5d5d; color: #eee; gap: 3px; }
.user svg { width: 16px; height: 18px; }
.user span { flex: 1; text-align: left; }
.user .tri { width: 26px; background: #c4c4c4; }
.statusright { margin-left: auto; display: flex; margin-right: -14px; }

.shelf { display: flex; height: 69px; border-top: 2px solid #373737; padding: 3px 0 0 4px; }
.shelfside { width: 20px; background: #373737; height: 62px; }
.shelfside svg { width: 20px; height: 62px; }
.shelfbody { flex: 1; min-width: 0; }
.tabs { display: grid; grid-template-columns: 98px 111px 67px 58px 83px 74px 36px 95px 57px 59px 60px 58px 126px 68px 52px; column-gap: 2px; background: #373737; height: 18px; padding-left: 5px; padding-top: 2px; }
.tabs button { text-align: center; font-size: 10px; color: #999; background: #3b3b3b; border: 1px solid #2f2f2f; border-bottom: 0; border-radius: 2px 2px 0 0; }
.tabs button:nth-child(n+14), .tabs button:nth-child(7), .tabs button:nth-child(n+10):nth-child(-n+12) { font-size: 12px; line-height: 14px; }
.tabs .active { background: #444; color: #fff; border-color: #444; }
.shelficons { display: flex; align-items: center; padding-left: 7px; height: 42px; }
.shelficons svg { width: 35px; height: 26px; }
.sepv { flex: none; width: 12px; height: 34px; background: linear-gradient(#999, #999) center / 2px 34px no-repeat; }
.ttext { font: 30px "Liberation Serif", serif; fill: #dd9253; stroke: #dd9253; }
.tsvg { font: bold 11px "Liberation Sans", sans-serif; fill: #444; }
.tzero { font: bold 11px "Liberation Sans", sans-serif; fill: #46a9b5; }

.main { flex: 1; min-height: 0; display: flex; border-top: 2px solid #373737; border-bottom: 2px solid #373737; }
.toolbox { width: 34px; display: flex; flex-direction: column; padding-bottom: 8px; }
.dots { height: 4px; margin: 2px; background: radial-gradient(circle, #888 30%, transparent 40%) 0 0 / 3px 3px; }
.tool { flex: none; width: 30px; height: 36px; margin-top: 1px; }
.toolbox .dots + .tool { margin-top: 4px; }
.toolgap { height: 38px; }
.toolline { height: 2px; margin: 5px 4px 3px 0; background: #999; }
.mlogo { width: 24px; height: 30px; }

.outliner { width: 272px; display: flex; flex-direction: column; border-left: 2px solid #373737; border-right: 3px solid #373737; padding: 0 4px 0 4px; }
.otab { background: #373737; margin: 0 -4px 0 -4px; height: 18px; display: flex; padding: 2px 2px 0; }
.otab span { background: #444; color: #fff; padding: 0 9px; font-size: 11px; line-height: 17px; width: 74px; border-radius: 2px 2px 0 0; white-space: nowrap; }
.omenu { display: grid; grid-template-columns: 69px 39px 60px; align-items: center; height: 23px; padding-left: 6px; font-size: 11px; color: #ccc; }
.osearch { display: flex; align-items: center; gap: 6px; padding: 5px 0 2px 4px; }
.osearch > svg { width: 16px; height: 16px; }
.searchbox { flex: 1; display: flex; align-items: center; height: 19px; background: #2b2b2b; border-radius: 2px; margin-right: 1px; }
.searchbox input { flex: 1; min-width: 0; padding-left: 2px; font-size: 11px; }
.searchbox input::placeholder { color: #888; opacity: 1; }
.searchbox i { width: 12px; height: 6px; margin-right: 3px; background: #ccc; clip-path: polygon(0 0, 10px 0, 5px 6px); }
.obody { flex: 1; display: flex; background: #373737; min-height: 0; }
.tree { flex: 1; margin: 0; padding: 0; list-style: none; font-size: 13px; color: #ccc; }
.tree li { display: flex; align-items: center; height: 20px; padding-left: 21px; }
.tree li > i, .tree .exp { width: 10px; height: 10px; margin-right: 4px; }
.tree svg { width: 16px; height: 16px; margin-right: 3px; }
.tree .dim { color: #6e6e6e; }
.tree .sel { background: #5285a6; color: #fff; }
.tree .hl { background: #434d5a; }
.vscroll { width: 14px; display: flex; flex-direction: column; align-items: center; padding: 3px 0 6px; gap: 5px; }
.vscroll b { flex: 1; width: 10px; background: #5d5d5d; border-radius: 4px; }
.vscroll i { width: 10px; height: 5px; background: #ccc; }
.up { clip-path: polygon(0 100%, 50% 0, 100% 100%); }
.down { clip-path: polygon(0 0, 100% 0, 50% 100%); }
.hscroll { display: flex; align-items: center; gap: 4px; background: #373737; padding: 0 16px 0 3px; }
.hscroll b { flex: 1; height: 10px; background: #5d5d5d; border-radius: 4px; }
.hscroll i { width: 5px; height: 9px; background: #bbb; }
.left { clip-path: polygon(100% 0, 100% 100%, 0 50%); }
.right { clip-path: polygon(0 0, 0 100%, 100% 50%); }
.outliner > .dots { height: 3px; margin: 1px 90px 6px 86px; }

.view { flex: 1; min-width: 0; display: flex; flex-direction: column; margin: 3px 0 3px 1px; border: 1px solid #8a8a8a; padding: 0 2px 2px; }
.vmenu { display: flex; align-items: center; height: 20px; gap: 13px; padding-left: 5px; font-size: 11px; color: #ccc; }
.vtools { display: flex; align-items: center; height: 21px; }
.vtools > svg, .vtools > span.on { flex: none; width: 19px; height: 19px; }
.vtools .sep { width: 11px; height: 16px; }
.vtools .sep.first { width: 9px; }
.vtools > svg.roomy { width: 22px; }
.vtools input { width: 38px; height: 15px; background: #2b2b2b; padding-left: 5px; color: #ccc; }
.vtools .combo { width: 180px; height: 18px; margin-left: 3px; font-size: 13px; }
.ton { font: bold 6px "Liberation Sans", sans-serif; fill: #123; }
.canvas { flex: 1; min-height: 0; background: #5c5c5c; display: grid; overflow: hidden; }
.canvas svg { width: 100%; height: 100%; min-height: 0; }

.hik { width: 349px; border-left: 4px solid #373737; margin-left: 1px; padding: 7px 68px 0 7px; }
.hikbtn, .hikbtn svg { width: 40px; height: 40px; }
.hikhead { display: flex; margin-bottom: 11px; padding-right: 2px; gap: 4px; }
.hikform { flex: 1; display: grid; grid-template-columns: 1fr 152px; gap: 3px 5px; align-items: center; text-align: right; font-size: 11px; }
.hik .off { color: #777; }
.combo.off { background: #4a4a4a; }
.combo.off::after { opacity: .4; }
.combo.off select { color: #666; opacity: 1; padding-left: 7px; }
.hik h2 { display: flex; align-items: center; margin: 0 0 6px 2px; height: 22px; background: #5d5d5d; border-radius: 2px; font-size: 12px; padding-left: 8px; gap: 11px; color: #ccc; }
.hik h2::before { content: ""; width: 11px; height: 6px; background: #eee; clip-path: polygon(0 0, 100% 0, 50% 100%); }
.hik h2:nth-of-type(2) { font-weight: 400; font-size: 11px; }
.hikbtns { display: flex; flex-direction: column; gap: 5px; padding: 0 30px 6px 32px; }
.hikbtns button, .dbtns button { height: 25px; background: #5d5d5d; border: 1px solid #656565; color: #eee; }
.hikbtns button { font-size: 11px; }

.timerow { display: flex; align-items: center; padding: 3px 0 5px 3px; gap: 7px; height: 40px; }
.timeline { flex: 1; min-width: 0; display: flex; height: 32px; background: #2b2b2b; overflow: hidden; padding-left: 9px; }
.cur { flex: none; width: 10px; background: #5a5a5a; color: #fff; font-weight: 400; text-align: center; padding-top: 11px; }
.timeline ol { display: flex; margin: 0; padding: 0 0 0 39px; list-style: none; flex: 1; min-width: 0; }
.timeline li { flex: 0 0 64px; color: #828282; padding-left: 3px; height: 28px; line-height: 14px; background: linear-gradient(#888, #888) 0 15px / 2px 13px no-repeat; }
.timerow .num { height: 20px; }
.play { display: flex; width: 178px; margin: 0 0 2px; overflow: hidden; padding-left: 1px; }
.play svg { width: 23px; height: 18px; }
.rangerow { display: flex; align-items: center; gap: 8px; height: 38px; border-top: 2px solid #373737; border-bottom: 2px solid #373737; padding-left: 4px; overflow: hidden; }
.rangerow > * { flex: none; }
.rangerow > .range { flex: 1 1 0; min-width: 0; height: 25px; background: #373737; padding: 2px 5px; }
.bar { width: 61%; height: 21px; background: #5d5d5d; border-radius: 3px; display: flex; align-items: center; gap: 4px; padding: 0 4px; color: #ccc; }
.bar i { width: 14px; height: 14px; background: #959595; border-radius: 3px; }
.bar .r { margin-left: auto; }
.rangerow .sep { width: 2px; background-size: 1px 20px, 2px 10px; }
.rangerow > .sep { margin-left: -1px; }
.rangerow .field { width: 119px; height: 25px; margin-left: -8px; }
.rangerow .wide { width: 143px; }
.rangerow .tri { width: 22px; }
.fps { width: 104px; margin-left: 6px; }
.opts { display: flex; align-items: center; width: 120px; gap: 6px; padding-left: 2px; }
.opts svg { width: 20px; height: 20px; }
.opts > svg { margin: 0 2px; }
.opts .sep { margin: 0 3px; }
.opts .cache { background: #5285a6; outline: 1px solid #1fe01f; width: 22px; height: 22px; padding: 1px; }
.cmdline { height: 4px; }

.dialog { position: absolute; left: 128px; top: 502px; width: 546px; background: #444; box-shadow: 0 2px 8px rgba(0, 0, 0, .45); padding: 0 6px 6px; }
.dialog header { display: flex; align-items: center; gap: 6px; height: 30px; margin: 0 -6px; padding-left: 8px; background: #fff; color: #999; }
.dialog header svg { width: 16px; height: 16px; }
.dialog h1 { flex: 1; margin: 0; font-size: 11px; font-weight: 400; }
.winbtns { display: flex; gap: 35px; padding-right: 19px; }
.dialog .winbtns svg { width: 10px; height: 10px; fill: none; stroke: #999; }
.dmenu { display: flex; gap: 14px; height: 22px; align-items: center; padding-left: 3px; color: #ccc; font-size: 12px; }
.dmenu button + button { font-size: 11px; }
.frame { margin: 2px -3px 7px; border: 1px solid #2e2e2e; border-top: 0; padding: 0 2px 2px; }
.frame form { display: grid; grid-template-columns: 170px 1fr; column-gap: 8px; row-gap: 3px; align-items: center; height: 284px; align-content: start; border: 1px solid #2e2e2e; border-top: 0; padding: 9px 10px 0 0; font-size: 11px; }
.frame form > label { text-align: right; }
.frame .check { grid-column: 2; display: flex; align-items: center; gap: 5px; text-align: left; height: 18px; white-space: nowrap; }
.frame .combo { margin-left: 1px; }
.w128 { width: 128px; } .w146 { width: 146px; } .w112 { width: 112px; } .w96 { width: 96px; }
.check input { appearance: none; width: 13px; height: 13px; background: #2b2b2b; display: grid; }
.check input:checked::before { content: ""; background: #eee; clip-path: polygon(10% 50%, 25% 38%, 42% 62%, 80% 8%, 95% 16%, 44% 92%); }
.slide { display: flex; align-items: center; gap: 3px; height: 20px; }
.slide input[type=text] { width: 78px; height: 19px; background: #2b2b2b; padding-left: 5px; color: #ccc; font-size: 12px; }
.slide input[type=range] { appearance: none; flex: 1; height: 14px; }
.slide input[type=range]::-webkit-slider-runnable-track { height: 4px; background: #2b2b2b; border-radius: 2px; }
.slide input[type=range]::-webkit-slider-thumb { appearance: none; width: 7px; height: 13px; margin-top: -5px; background: #bdbdbd; border-radius: 1px; }
.dbtns { display: grid; grid-template-columns: repeat(3, 1fr); gap: 4px; }
.dbtns button { height: 26px; font-size: 11px; }
.strokes { position: absolute; inset: 0; width: 547px; height: 380px; fill: none; stroke: #080808; stroke-width: 3; stroke-linecap: round; pointer-events: none; }
.note { position: absolute; margin: 0; font: 30px/36px "Noto Sans", sans-serif; color: #000; white-space: nowrap; pointer-events: none; }
.n-joint { left: 354px; top: 0; }
.n-close { left: 350px; top: 56px; }
.n-classic { left: 361px; top: 91px; }
.n-inter { left: 363px; top: 130px; }
.n-dist { left: 379px; top: 172px; }
```
